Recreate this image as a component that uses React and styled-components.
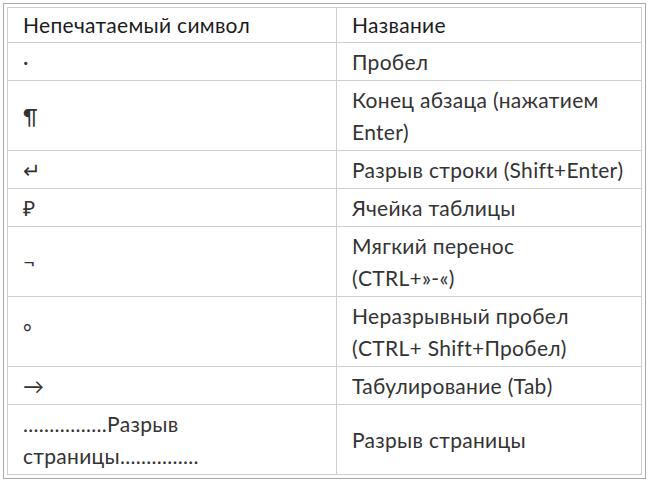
import React from 'react'
import styled, { createGlobalStyle } from 'styled-components'

const Global = createGlobalStyle`
  body {
    margin: 0;
    background: #fff;
    font-family: Lato, "Open Sans", sans-serif;
  }
`

const Frame = styled.div`
  margin: 3px 0 0 3px;
  width: 643px;
  box-sizing: border-box;
  border: 1px solid #a8a8a8;
  padding: 3px;
`

const Table = styled.table`
  width: 100%;
  table-layout: fixed;
  border-collapse: collapse;
  border: 1px solid #b4b4b4;
  font-size: 21px;
  letter-spacing: 0.3px;
  line-height: 32px;
`

const Col = styled.col`
  width: ${props => props.$w};
`

const Cell = styled.td`
  border: 1px solid #cfcfcf;
  padding: ${props => props.$head ? '1px 8px 1px 15px' : '3px 8px 2px 15px'};
  vertical-align: middle;
  white-space: pre-line;
  color: ${props => props.$head ? '#1c1c1c' : '#333'};
`

const rows = [
  ['·', 'Пробел'],
  ['¶', 'Конец абзаца (нажатием Enter)'],
  ['↵', 'Разрыв строки (Shift+Enter)'],
  ['₽', 'Ячейка таблицы'],
  ['¬', 'Мягкий перенос\n(CTRL+»-«)'],
  ['°', 'Неразрывный пробел (CTRL+ Shift+Пробел)'],
  ['→', 'Табулирование (Tab)'],
  ['................Разрыв страницы...............', 'Разрыв страницы']
]

const App = () => {
  return (
    <>
      <Global />
      <Frame>
        <Table>
          <colgroup>
            <Col $w='329px' />
            <Col $w='auto' />
          </colgroup>
          <tbody>
            <tr>
              <Cell $head>Непечатаемый символ</Cell>
              <Cell $head>Название</Cell>
            </tr>
            {rows.map(([sym, name], i) => (
              <tr key={i}>
                <Cell>{sym}</Cell>
                <Cell>{name}</Cell>
              </tr>
            ))}
          </tbody>
        </Table>
      </Frame>
    </>
  )
}

export default App
